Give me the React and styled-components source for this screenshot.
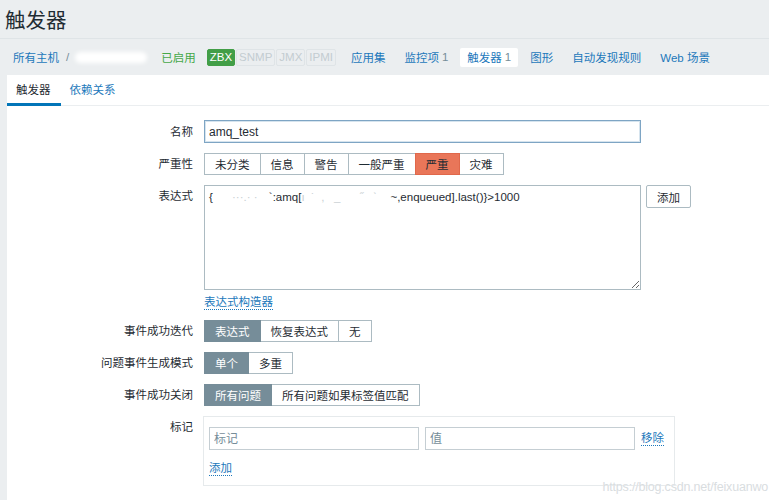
import React from 'react'
import styled, { createGlobalStyle } from 'styled-components'

const font = `"Liberation Sans", Arial, "Noto Sans CJK SC", sans-serif`

const GlobalStyle = createGlobalStyle`
  html, body {
    margin: 0;
    padding: 0;
    background: #ebeef0;
    font-family: ${font};
    font-size: 11.5px;
    color: #1f2c33;
  }
`

const Page = styled.div`
  position: relative;
  width: 769px;
  height: 500px;
  overflow: hidden;
`

const TitleBar = styled.header`
  height: 38px;
  padding: 0 5px;
  display: flex;
  align-items: center;
  border-bottom: 1px solid #dfe4e7;
`

const Title = styled.h1`
  margin: 0;
  font-size: 20.5px;
  font-weight: normal;
  color: #1f2c33;
`

const Crumbs = styled.nav`
  height: 36px;
  display: flex;
  align-items: center;
  padding-left: 6px;
`

const NavItem = styled.a`
  display: inline-flex;
  align-items: center;
  height: 19px;
  padding: 0 7px;
  margin-right: ${(p) => p.$mr ?? 5}px;
  color: #1c78bb;
  background: ${(p) => (p.$active ? '#fff' : 'transparent')};
  border-radius: 2px;
  text-decoration: none;
  white-space: nowrap;
`

const Count = styled.span`
  color: #768d99;
  margin-left: 3px;
`

const Slash = styled.span`
  color: #768d99;
  margin: 0 6px 0 0;
`

const Hidden = styled.span`
  display: inline-block;
  width: 72px;
  height: 11px;
  background: #fff;
  border-radius: 6px;
  filter: blur(2px);
  margin-right: 14px;
`

const Enabled = styled.span`
  color: #45a848;
  margin-right: 11px;
`

const Badges = styled.div`
  display: flex;
  gap: 1px;
  margin-right: 8px;
`

const Badge = styled.span`
  height: 15px;
  padding: 0 2px;
  display: inline-flex;
  align-items: center;
  font-size: 11.5px;
  border-radius: 2px;
  color: ${(p) => (p.$on ? '#fff' : '#c3ccd1')};
  background: ${(p) => (p.$on ? '#429e47' : '#ebeef0')};
  border: 1px solid ${(p) => (p.$on ? '#429e47' : '#dfe4e7')};
`

const Panel = styled.section`
  margin-left: 7px;
  background: #fff;
  height: 425px;
`

const Tabs = styled.div`
  display: flex;
  height: 30px;
  border-bottom: 1px solid #ebeef0;
`

const Tab = styled.a`
  display: flex;
  align-items: center;
  padding: 0 10px 0 9px;
  color: ${(p) => (p.$active ? '#1f2c33' : '#1c78bb')};
  border-bottom: 3px solid ${(p) => (p.$active ? '#0275b8' : 'transparent')};
  margin-bottom: -1px;
`

const Form = styled.div`
  display: grid;
  grid-template-columns: 186px 1fr;
  column-gap: 11px;
  row-gap: 10px;
  padding-top: 14px;
`

const Label = styled.div`
  text-align: right;
  align-self: ${(p) => (p.$top ? 'start' : 'center')};
  padding-top: ${(p) => (p.$top ? '3px' : 0)};
  line-height: 16px;
`

const Cell = styled.div`
  display: flex;
  align-items: flex-start;
`

const TextInput = styled.input`
  box-sizing: border-box;
  width: ${(p) => p.$w}px;
  height: 23px;
  padding: 0 4px;
  border: 1px solid ${(p) => (p.$focus ? '#7ea5c4' : '#c5ced3')};
  box-shadow: ${(p) => (p.$focus ? 'inset 0 0 0 1px #d6e4ee' : 'none')};
  font-family: ${font};
  font-size: 12px;
  color: #1f2c33;
  outline: none;
  &::placeholder {
    color: #768d99;
  }
`

const Segments = styled.div`
  display: flex;
`

const Segment = styled.span`
  box-sizing: border-box;
  height: 22px;
  display: flex;
  align-items: center;
  padding: 0 10px;
  border: 1px solid #acbbc2;
  margin-left: -1px;
  &:first-child {
    margin-left: 0;
  }
  background: ${(p) => p.$bg || '#fff'};
  color: ${(p) => p.$fg || '#1f2c33'};
  border-color: ${(p) => p.$border || '#acbbc2'};
  position: relative;
  z-index: ${(p) => (p.$bg ? 1 : 0)};
`

const ExprCol = styled.div`
  display: flex;
  flex-direction: column;
  align-items: flex-start;
`

const ExprBox = styled.div`
  box-sizing: border-box;
  width: 437px;
  height: 105px;
  padding: 3px 4px;
  border: 1px solid #acbbc2;
  resize: both;
  overflow: auto;
  line-height: 16px;
  white-space: pre;
  font-size: 11.5px;
`

const Faint = styled.span`
  display: inline-block;
  width: ${(p) => p.$w}px;
  color: #c8cfd3;
  overflow: hidden;
  vertical-align: top;
`

const DotLink = styled.a`
  color: #1c78bb;
  border-bottom: 1px dotted #1c78bb;
  line-height: 14px;
  margin-top: ${(p) => p.$mt || 0}px;
  white-space: nowrap;
`

const Button = styled.button`
  box-sizing: border-box;
  height: 23px;
  padding: 0 10px;
  margin-left: 5px;
  background: #fff;
  border: 1px solid #acbbc2;
  border-radius: 2px;
  font-family: ${font};
  font-size: 11.5px;
  color: #1f2c33;
`

const TagBox = styled.div`
  box-sizing: border-box;
  width: 472px;
  margin-left: -1px;
  padding: 10px 5px 9px 5px;
  border: 1px solid #e6eaec;
  display: flex;
  flex-direction: column;
  align-items: flex-start;
`

const TagRow = styled.div`
  display: flex;
  align-items: center;
  gap: 6px;
`

const Watermark = styled.div`
  position: absolute;
  right: 1px;
  bottom: 6px;
  font-size: 12.5px;
  color: #d9dddf;
  text-shadow: 0 0 1px #fff;
  letter-spacing: -0.2px;
`

const severities = ['未分类', '信息', '警告', '一般严重', '严重', '灾难']

export default function App() {
  return (
    <Page>
      <GlobalStyle />
      <TitleBar>
        <Title>触发器</Title>
      </TitleBar>
      <Crumbs>
        <NavItem $mr={0}>所有主机</NavItem>
        <Slash>/</Slash>
        <Hidden />
        <Enabled>已启用</Enabled>
        <Badges>
          <Badge $on>ZBX</Badge>
          <Badge>SNMP</Badge>
          <Badge>JMX</Badge>
          <Badge>IPMI</Badge>
        </Badges>
        <NavItem>应用集</NavItem>
        <NavItem>
          监控项<Count>1</Count>
        </NavItem>
        <NavItem $active>
          触发器<Count>1</Count>
        </NavItem>
        <NavItem>图形</NavItem>
        <NavItem>自动发现规则</NavItem>
        <NavItem>Web 场景</NavItem>
      </Crumbs>
      <Panel>
        <Tabs>
          <Tab $active>触发器</Tab>
          <Tab>依赖关系</Tab>
        </Tabs>
        <Form>
          <Label>名称</Label>
          <Cell>
            <TextInput $w={437} $focus readOnly value="amq_test" />
          </Cell>

          <Label>严重性</Label>
          <Segments>
            {severities.map((s) => (
              <Segment
                key={s}
                $bg={s === '严重' ? '#e97659' : undefined}
                $border={s === '严重' ? '#e0684b' : undefined}
              >
                {s}
              </Segment>
            ))}
          </Segments>

          <Label $top>表达式</Label>
          <Cell>
            <ExprCol>
              <ExprBox>
                {'{'}
                <Faint $w={56}>{'      ···.· ·'}</Faint>
                {'`:amq['}
                <Faint $w={89}>{'ı  ˙  ,   _      ˝   ˋ'}</Faint>
                {'~,enqueued].last()}>1000'}
              </ExprBox>
              <DotLink $mt={5}>表达式构造器</DotLink>
            </ExprCol>
            <Button>添加</Button>
          </Cell>

          <Label>事件成功迭代</Label>
          <Segments>
            <Segment $bg="#768d99" $fg="#fff" $border="#768d99">表达式</Segment>
            <Segment>恢复表达式</Segment>
            <Segment>无</Segment>
          </Segments>

          <Label>问题事件生成模式</Label>
          <Segments>
            <Segment $bg="#768d99" $fg="#fff" $border="#768d99">单个</Segment>
            <Segment>多重</Segment>
          </Segments>

          <Label>事件成功关闭</Label>
          <Segments>
            <Segment $bg="#768d99" $fg="#fff" $border="#768d99">所有问题</Segment>
            <Segment>所有问题如果标签值匹配</Segment>
          </Segments>

          <Label $top>标记</Label>
          <Cell>
            <TagBox>
              <TagRow>
                <TextInput $w={210} readOnly placeholder="标记" />
                <TextInput $w={210} readOnly placeholder="值" />
                <DotLink>移除</DotLink>
              </TagRow>
              <DotLink $mt={11}>添加</DotLink>
            </TagBox>
          </Cell>
        </Form>
      </Panel>
      <Watermark>https://blog.csdn.net/feixuanwo</Watermark>
    </Page>
  )
}
